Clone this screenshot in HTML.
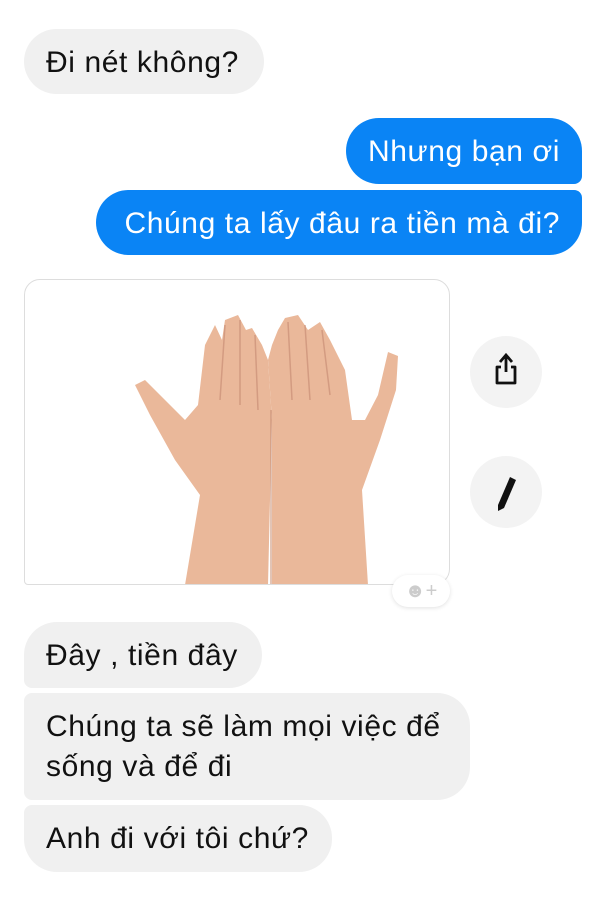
<!DOCTYPE html>
<html><head><meta charset="utf-8"><style>
body{margin:0;width:600px;height:900px;background:#fff;font-family:"Liberation Sans",Arial,sans-serif;position:relative;overflow:hidden}
.b{position:absolute;font-size:30px;letter-spacing:0.6px;line-height:34px;box-sizing:border-box;padding:17px 22px 15px;white-space:nowrap}
.g{background:#f0f0f0;color:#111}
.u{background:#0a84f5;color:#fff;text-align:right}
.c{position:absolute;width:72px;height:72px;border-radius:50%;background:#f3f3f3}
</style></head><body>
<div class="b g" style="left:24px;top:29px;width:240px;height:65px;border-radius:33px">Đi nét không?</div>
<div class="b u" style="left:346px;top:118px;width:236px;height:66px;border-radius:33px 33px 8px 33px">Nhưng bạn ơi</div>
<div class="b u" style="left:96px;top:190px;width:486px;height:65px;border-radius:33px 8px 33px 33px">Chúng ta lấy đâu ra tiền mà đi?</div>
<div style="position:absolute;left:24px;top:279px;width:426px;height:306px;border:1px solid #ddd;border-radius:16px 16px 16px 4px;box-sizing:border-box;background:#fff;overflow:hidden">
<svg width="426" height="306" viewBox="24 279 426 306" style="position:absolute;left:-1px;top:-1px">
<g fill="#eab89a">
<path d="M185 585 L200 495 L175 460 L150 415 L135 385 L145 380 L165 400 L185 420 L198 405 L205 345 L215 325 L222 340 L225 320 L238 315 L246 330 L252 328 L262 345 L268 360 L272 420 L270 500 L268 585 Z"/>
<path d="M272 585 L272 500 L272 420 L268 360 L272 345 L278 330 L285 318 L298 315 L308 330 L320 322 L330 340 L345 370 L352 420 L365 420 L378 395 L388 352 L398 356 L396 390 L380 440 L362 490 L368 585 Z"/>
</g>
<g stroke="#c98f76" stroke-width="1.5" fill="none" opacity=".7">
<path d="M225 325 L220 400 M240 320 L240 405 M255 335 L258 410 M288 322 L292 400 M305 325 L310 400 M322 330 L330 395 M271 410 L271 585"/>
</g>
</svg></div>
<div style="position:absolute;left:392px;top:575px;width:58px;height:32px;border-radius:16px;background:#fff;box-shadow:0 1px 4px rgba(0,0,0,.12);color:#ccc;font-size:20px;line-height:32px;text-align:center">☻+</div>
<div class="c" style="left:470px;top:336px"></div>
<svg style="position:absolute;left:490px;top:352px" width="32" height="34" viewBox="0 0 32 34"><path d="M16 20 V4 M10 10 L16 3 L22 10" stroke="#111" stroke-width="2.8" fill="none"/><path d="M11 15 H7 V31 H25 V15 H21" stroke="#111" stroke-width="2.8" fill="none" stroke-linejoin="round"/></svg>
<div class="c" style="left:470px;top:456px"></div>
<svg style="position:absolute;left:492px;top:474px" width="28" height="40" viewBox="0 0 28 40"><path d="M18 3 L24 6 L12 34 L6 37 L6 31 Z" fill="#111"/></svg>
<div class="b g" style="left:24px;top:622px;width:238px;height:66px;border-radius:33px 33px 33px 8px">Đây , tiền đây</div>
<div class="b g" style="left:24px;top:693px;width:446px;height:107px;border-radius:8px 33px 33px 8px;padding-top:14px;line-height:40px">Chúng ta sẽ làm mọi việc để<br>sống và để đi</div>
<div class="b g" style="left:24px;top:805px;width:308px;height:67px;border-radius:8px 33px 33px 33px">Anh đi với tôi chứ?</div>
</body></html>
